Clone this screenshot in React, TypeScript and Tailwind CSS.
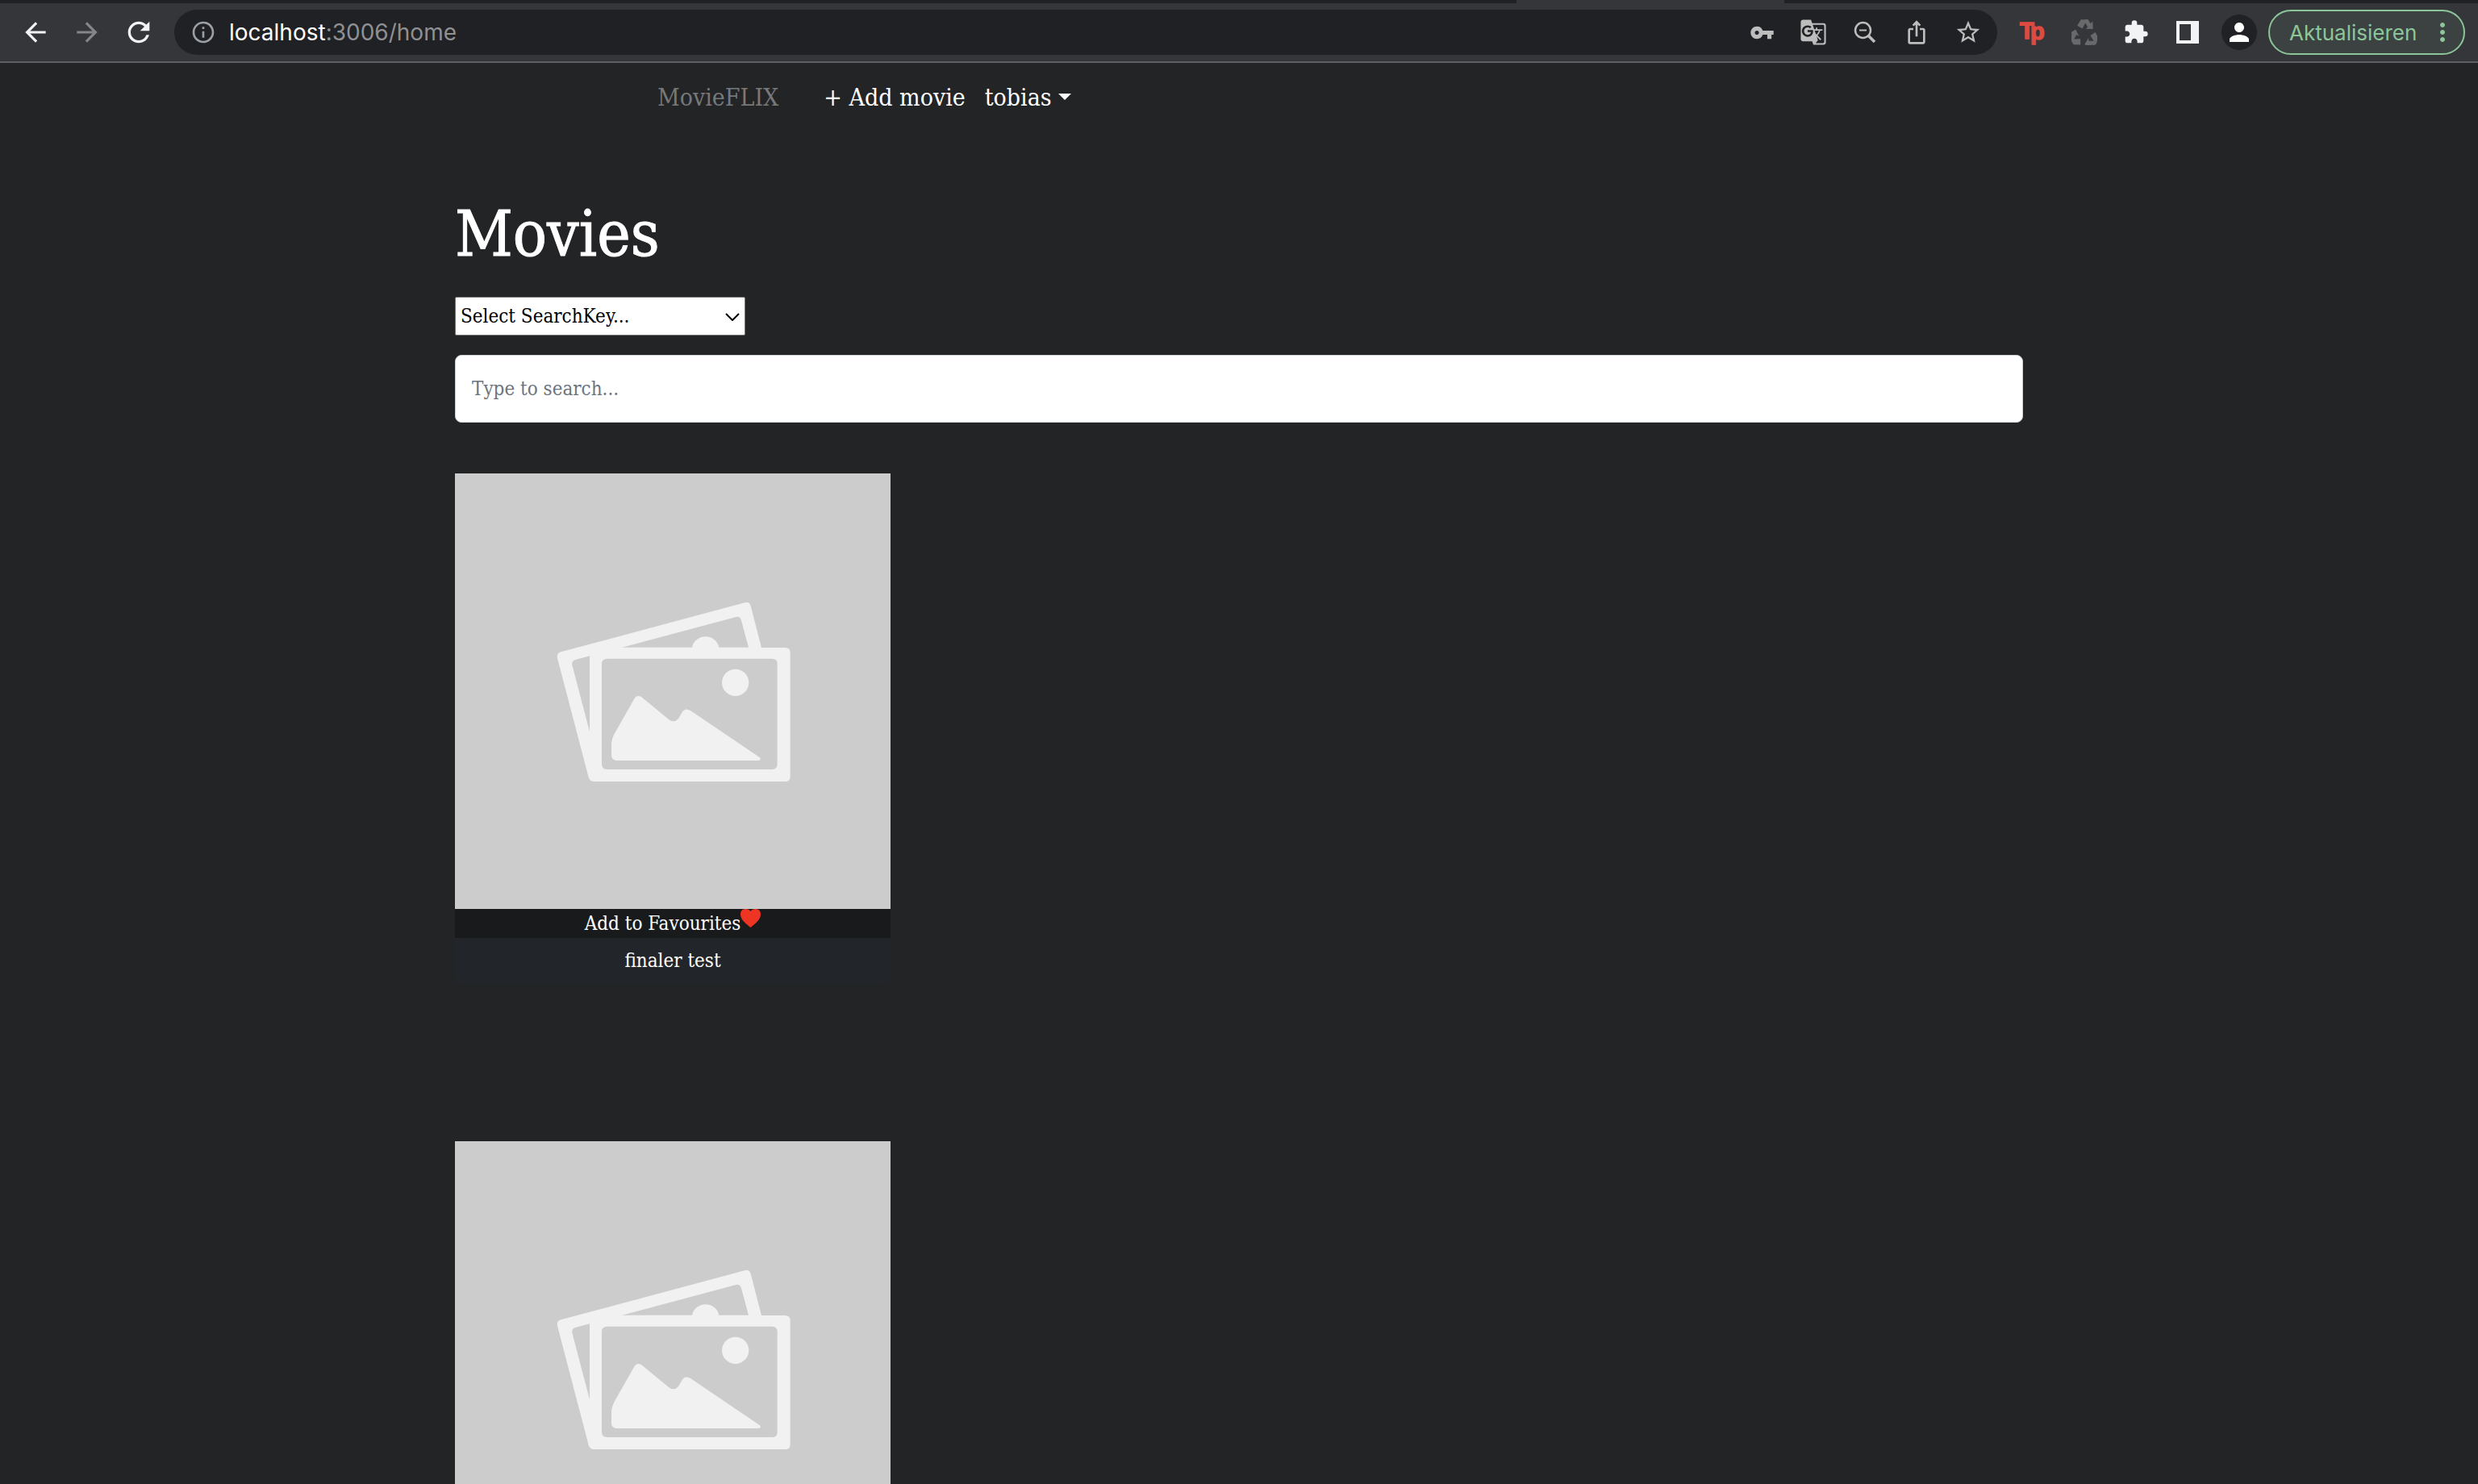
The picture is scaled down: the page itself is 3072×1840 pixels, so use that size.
import type { ReactNode } from 'react';
import {
  MdArrowBack,
  MdArrowForward,
  MdExtension,
  MdGTranslate,
  MdInfoOutline,
  MdIosShare,
  MdMoreVert,
  MdPerson,
  MdRefresh,
  MdStarBorder,
  MdVpnKey,
} from 'react-icons/md';

function IconButton({ label, className = '', children }: { label: string; className?: string; children: ReactNode }) {
  return (
    <button type="button" aria-label={label} className={`flex h-14 w-16 shrink-0 items-center justify-center ${className}`}>
      {children}
    </button>
  );
}

function RecycleIcon() {
  const arrow = 'M20 22L33 1H44L50 10L38 32ZM48 0H58L66 14L74 8L75 34L49 33L57 27L42 2Z';
  return (
    <svg width="32" height="32" viewBox="0 0 90 90" fill="currentColor">
      <path d={arrow} />
      <path d={arrow} transform="rotate(120 45 52)" />
      <path d={arrow} transform="rotate(240 45 52)" />
    </svg>
  );
}

function TabStrip() {
  return (
    <div className="flex h-1 bg-[#202124]">
      <div className="ml-[61.2%] h-1 w-[10.8%] bg-[#35363a]" />
    </div>
  );
}

function Toolbar() {
  return (
    <div className="flex h-[74px] items-center border-b-2 border-[#5f6063] bg-[#35363a] pr-4 pl-3 font-['Inter'] text-[#f1f3f4]">
      <IconButton label="Back"><MdArrowBack size={38} /></IconButton>
      <IconButton label="Forward" className="text-[#85868a]"><MdArrowForward size={38} /></IconButton>
      <IconButton label="Reload"><MdRefresh size={40} /></IconButton>
      <div className="ml-3 flex h-14 flex-1 items-center rounded-full bg-[#202124] pr-1 pl-5 text-[#bdbdbe]">
        <MdInfoOutline size={32} className="mr-4 shrink-0 text-[#9aa0a6]" />
        <span className="flex-1 text-[28px] text-[#8f9093]">
          <span className="text-white">localhost</span>:3006/home
        </span>
        <IconButton label="Passwords"><MdVpnKey size={31} /></IconButton>
        <IconButton label="Translate"><MdGTranslate size={34} /></IconButton>
        <IconButton label="Zoom">
          <svg width="28" height="28" viewBox="0 0 28 28" fill="none" stroke="currentColor" strokeWidth="2.500">
            <circle cx="11.500" cy="11.500" r="9.500" />
            <path d="M7 11.500H16" strokeWidth="2" />
            <path d="M18 18L26 26" strokeWidth="3.500" />
          </svg>
        </IconButton>
        <IconButton label="Share"><MdIosShare size={32} /></IconButton>
        <IconButton label="Bookmark"><MdStarBorder size={34} /></IconButton>
      </div>
      <IconButton label="Tp" className="ml-3">
        <svg width="32" height="32" viewBox="0 0 32 32" fill="#df4a40" stroke="#df4a40" strokeWidth="1.500" className="overflow-visible font-['Liberation_Sans'] font-bold">
          <text x="0" y="24" fontSize="29">T</text>
          <text x="13" y="25" fontSize="29">p</text>
        </svg>
      </IconButton>
      <IconButton label="Recycle" className="text-[#68696b]"><RecycleIcon /></IconButton>
      <IconButton label="Extensions"><MdExtension size={32} /></IconButton>
      <IconButton label="Side panel">
        <svg width="28" height="28" viewBox="0 0 28 28" fill="currentColor">
          <path fillRule="evenodd" d="M0 0H28V28H0ZM4 4V24H18V4Z" />
        </svg>
      </IconButton>
      <IconButton label="Profile">
        <span className="flex size-11 items-center justify-center rounded-full bg-[#202124] text-white">
          <MdPerson size={36} />
        </span>
      </IconButton>
      <button type="button" className="ml-1 flex h-14 w-[244px] items-center justify-between rounded-full border-2 border-[#8cc698] bg-[#3c4241] pr-2 pl-6 text-[26px] text-[#8cc698]">
        Aktualisieren
        <MdMoreVert size={36} />
      </button>
    </div>
  );
}

function Navbar() {
  return (
    <nav className="mx-auto flex h-21 max-w-[1944px] items-center pl-[251px] text-[30px] text-white">
      <a href="#home" className="text-[#77787a]">MovieFLIX</a>
      <a href="#add" className="ml-14">+ Add movie</a>
      <button type="button" className="ml-6 flex items-center gap-2">
        tobias
        <svg width="16" height="8" viewBox="0 0 16 8" fill="currentColor"><path d="M0 0H16L8 8Z" /></svg>
      </button>
    </nav>
  );
}

function PlaceholderImage() {
  return (
    <svg viewBox="0 0 540 540" role="img" aria-label="Movie poster placeholder" className="block w-full bg-[#ccc]">
      <g transform="translate(96 133) scale(.33333)" fill="#f1f1f1">
        <path
          fillRule="evenodd"
          d="M106 265L792 81Q807 78 812 94L852 249H940Q959 249 959 268V728Q959 747 940 747H230Q214 747 209 731L93 288Q89 270 106 265ZM334 248H594C605 194 683 194 694 248H804L777 148Q772 132 757 135ZM160 294Q145 299 148 314L213 562V280ZM278 290Q258 290 258 310V682Q258 702 278 702H892Q911 702 911 682V310Q911 290 892 290Z"
        />
        <circle cx="755" cy="379" r="50" />
        <path d="M294 610Q294 590 306 568L378 441Q388 422 406 433L506 515Q527 532 543 513L557 489Q568 471 588 483L846 658Q853 667 840 669H314Q294 669 294 649Z" />
      </g>
    </svg>
  );
}

function MovieCard({ title }: { title?: string }) {
  return (
    <article className="mb-[195px] w-[540px] overflow-hidden rounded-b-lg bg-[#222529] text-center text-[24px] text-white">
      <PlaceholderImage />
      {title && (
        <>
          <button type="button" className="flex h-9 w-full justify-center bg-[#191a1b] leading-9">
            Add to Favourites
            <svg width="25" height="23" viewBox="0 0 25 23" fill="#ee3524">
              <path d="M12.500 23C8 19 0 14 0 6.500C0 2 3 0 6.500 0C9 0 11.500 1 12.500 3C13.500 1 16 0 18.500 0C22 0 25 2 25 6.500C25 14 17 19 12.500 23Z" />
            </svg>
          </button>
          <h2 className="h-[57px] leading-[57px]">{title}</h2>
        </>
      )}
    </article>
  );
}

export default function App() {
  return (
    <div className="h-screen overflow-hidden bg-[#232426] font-['Roboto_Slab','DejaVu_Serif_Condensed','DejaVu_Serif',serif]">
      <header>
        <TabStrip />
        <Toolbar />
      </header>
      <Navbar />
      <main className="mx-auto max-w-[1944px] pt-20">
        <h1 className="text-[78px] leading-24 text-white [-webkit-text-stroke:1px]">Movies</h1>
        <div className="relative mt-[30px] w-[360px]">
          <select aria-label="Search key" className="block h-12 w-full appearance-none rounded-xs border border-[#767676] bg-white pl-1.5 text-[24px] text-black">
            <option>Select SearchKey...</option>
          </select>
          <svg width="18" height="10" viewBox="0 0 18 10" fill="none" stroke="black" strokeWidth="2" className="pointer-events-none absolute top-5 right-[7px]">
            <path d="M1 1L9 9L17 1" />
          </svg>
        </div>
        <input
          type="text"
          aria-label="Search movies"
          placeholder="Type to search..."
          className="mt-6 mb-[63px] block h-21 w-full rounded-lg border border-[#ced4da] bg-white px-5 text-[24px] text-black placeholder:text-[#6c757d]"
        />
        <MovieCard title="finaler test" />
        <MovieCard />
      </main>
    </div>
  );
}
